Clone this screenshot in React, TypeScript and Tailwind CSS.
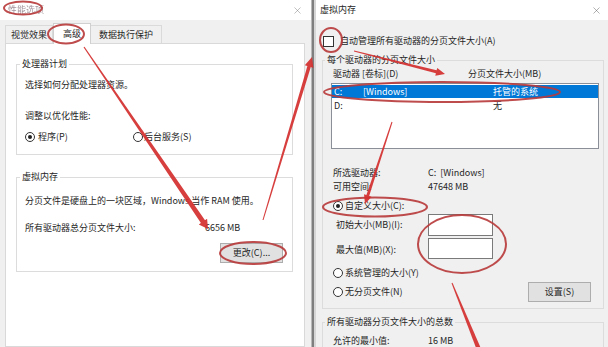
import { X } from "lucide-react";

const font = 'font-["Noto_Sans_CJK_SC","Noto_Sans",sans-serif]';

function Radio({ checked }: { checked?: boolean }) {
  return (
    <span className="flex h-[10px] w-[10px] shrink-0 items-center justify-center rounded-full border border-[#333] bg-white">
      {checked && <span className="h-[4px] w-[4px] rounded-full bg-[#222]" />}
    </span>
  );
}

function Button({ label }: { label: string }) {
  return (
    <div className="flex h-[20px] w-[63px] items-center justify-center border border-[#adadad] bg-[#e1e1e1]">
      {label}
    </div>
  );
}

// tapered red arrow: thin at start, thick at the head
function arrowPoints(
  x1: number,
  y1: number,
  x2: number,
  y2: number,
  w1: number,
  w2: number,
  head: number,
  headW: number
) {
  const dx = x2 - x1;
  const dy = y2 - y1;
  const len = Math.hypot(dx, dy);
  const ux = dx / len;
  const uy = dy / len;
  const nx = -uy;
  const ny = ux;
  const bx = x2 - ux * head;
  const by = y2 - uy * head;
  const pts: [number, number][] = [
    [x1 + (nx * w1) / 2, y1 + (ny * w1) / 2],
    [bx + (nx * w2) / 2, by + (ny * w2) / 2],
  ];
  if (head > 0) {
    pts.push([bx + (nx * headW) / 2, by + (ny * headW) / 2]);
    pts.push([x2, y2]);
    pts.push([bx - (nx * headW) / 2, by - (ny * headW) / 2]);
  }
  pts.push([bx - (nx * w2) / 2, by - (ny * w2) / 2]);
  pts.push([x1 - (nx * w1) / 2, y1 - (ny * w1) / 2]);
  return pts.map((p) => `${p[0].toFixed(1)},${p[1].toFixed(1)}`).join(" ");
}

const arrows = [
  arrowPoints(84, 47, 208, 229, 1.2, 5, 9, 10),
  arrowPoints(263, 220, 312, 57, 1, 3.5, 10, 9),
  arrowPoints(354, 51, 445, 74, 1, 3, 9, 8),
  arrowPoints(392, 122, 365, 204, 1, 3, 9, 8),
  arrowPoints(452, 283, 480, 352, 1, 4.5, 0, 0),
];

const ellipses = [
  { cx: 23, cy: 8, rx: 19, ry: 6.5 },
  { cx: 66, cy: 34, rx: 18, ry: 9.5 },
  { cx: 253, cy: 253, rx: 33, ry: 11 },
  { cx: 331, cy: 40, rx: 11, ry: 12 },
  { cx: 442, cy: 92, rx: 118, ry: 10 },
  { cx: 375, cy: 207, rx: 52, ry: 9.5 },
  { cx: 462, cy: 244, rx: 44, ry: 29 },
];

function PerformanceDialog() {
  return (
    <div className="flex w-[311px] shrink-0 flex-col">
      <div className="flex h-[20px] shrink-0 items-center justify-between bg-white pl-[8px] pr-[8px]">
        <span className="text-[9px] text-[#a4949c] blur-[0.5px]">性能选项</span>
        <X size={11} strokeWidth={1} className="text-[#777]" />
      </div>
      <div className="flex flex-1 flex-col bg-[#f0f0f0] pl-[5px] pr-[6px]">
        <div className="flex h-[23px] shrink-0 items-end">
          <div className="flex h-[18px] items-center border border-b-0 border-[#dadada] px-[5px]">视觉效果</div>
          <div className="relative -mb-px flex h-[21px] items-center border border-b-0 border-[#d0d0d0] bg-white px-[9px]">
            高级
          </div>
          <div className="flex h-[18px] items-center border border-b-0 border-l-0 border-[#dadada] px-[8px]">
            数据执行保护
          </div>
        </div>
        <div className="flex flex-1 flex-col border border-[#d9d9d9] bg-white">
          <fieldset className="ml-[10px] mr-[11px] mt-[14px] shrink-0 border border-[#dcdcdc] pb-[11px] pl-[8px] pr-[8px]">
            <legend className="ml-[-5px] px-[2px] leading-[12px]">处理器计划</legend>
            <div className="mt-[9px] h-[12px]">选择如何分配处理器资源。</div>
            <div className="mt-[19px] h-[12px]">调整以优化性能:</div>
            <div className="mt-[9px] flex h-[12px] items-center">
              <div className="flex w-[108px] items-center gap-[3px]">
                <Radio checked />
                <span>程序(P)</span>
              </div>
              <div className="flex items-center gap-[1px]">
                <Radio />
                <span>后台服务(S)</span>
              </div>
            </div>
          </fieldset>
          <fieldset className="ml-[10px] mr-[11px] mt-[16px] shrink-0 border border-[#dcdcdc] pb-[8px] pl-[8px] pr-[9px]">
            <legend className="ml-[-5px] px-[2px] leading-[12px]">虚拟内存</legend>
            <div className="mt-[12px] h-[12px] whitespace-nowrap">分页文件是硬盘上的一块区域，Windows 当作 RAM 使用。</div>
            <div className="mt-[15px] flex h-[12px]">
              <span className="w-[180px]">所有驱动器总分页文件大小:</span>
              <span>6656 MB</span>
            </div>
            <div className="mt-[9px] flex justify-end">
              <Button label="更改(C)..." />
            </div>
          </fieldset>
        </div>
      </div>
    </div>
  );
}

function VirtualMemoryDialog() {
  return (
    <div className="flex flex-1 flex-col">
      <div className="flex h-[20px] shrink-0 items-center justify-between bg-white pl-[4px] pr-[6px]">
        <span className="text-[9px]">虚拟内存</span>
        <X size={11} strokeWidth={1} className="text-[#555]" />
      </div>
      <div className="flex flex-1 flex-col bg-[#f0f0f0]">
        <div className="mt-[15px] flex h-[12px] shrink-0 items-center gap-[6px] pl-[7px]">
          <span className="h-[11px] w-[11px] border border-[#333] bg-white" />
          <span>自动管理所有驱动器的分页文件大小(A)</span>
        </div>
        <fieldset className="ml-[6px] mr-[4px] mt-[7px] shrink-0 border border-[#dcdcdc] pb-[6px] pl-[8px] pr-[4px]">
          <legend className="ml-[-6px] px-[2px] leading-[12px]">每个驱动器的分页文件大小</legend>
          <div className="mt-[2px] flex h-[12px] pl-[2px]">
            <span className="w-[135px]">驱动器 [卷标](D)</span>
            <span>分页文件大小(MB)</span>
          </div>
          <div className="mt-[3px] h-[66px] w-[268px] border border-[#8a8f98] bg-white pt-[1px]">
            <div className="flex h-[13px] items-center bg-[#0078d7] pl-[2px] text-white">
              <span className="w-[29px]">C:</span>
              <span className="w-[130px]">[Windows]</span>
              <span>托管的系统</span>
            </div>
            <div className="mt-[2px] flex h-[12px] items-center pl-[2px]">
              <span className="w-[159px]">D:</span>
              <span>无</span>
            </div>
          </div>
          <div className="mt-[18px] flex h-[12px] pl-[2px]">
            <span className="w-[95px]">所选驱动器:</span>
            <span>C:&nbsp; [Windows]</span>
          </div>
          <div className="mt-[2px] flex h-[12px] pl-[2px]">
            <span className="w-[95px]">可用空间:</span>
            <span>47648 MB</span>
          </div>
          <div className="mt-[7px] flex h-[12px] items-center gap-[2px] pl-[2px]">
            <Radio checked />
            <span>自定义大小(C):</span>
          </div>
          <div className="mt-[2px] flex h-[22px] items-center pl-[5px]">
            <span className="w-[92px]">初始大小(MB)(I):</span>
            <span className="h-[22px] w-[65px] border border-[#7a7a7a] bg-white" />
          </div>
          <div className="mt-[2px] flex h-[21px] items-center pl-[5px]">
            <span className="w-[92px] pt-[2px]">最大值(MB)(X):</span>
            <span className="h-[21px] w-[65px] border border-[#7a7a7a] bg-white" />
          </div>
          <div className="mt-[8px] flex h-[12px] items-center gap-[2px] pl-[2px]">
            <Radio />
            <span>系统管理的大小(Y)</span>
          </div>
          <div className="mt-[3px] flex h-[20px] items-center pl-[2px]">
            <div className="flex items-center gap-[2px]">
              <Radio />
              <span>无分页文件(N)</span>
            </div>
            <div className="ml-auto mr-[8px]">
              <Button label="设置(S)" />
            </div>
          </div>
        </fieldset>
        <fieldset className="ml-[6px] mr-[4px] mt-[7px] shrink-0 border border-[#dcdcdc] pb-[6px] pl-[8px]">
          <legend className="ml-[-6px] px-[2px] leading-[12px]">所有驱动器分页文件大小的总数</legend>
          <div className="mt-[7px] flex h-[12px] pl-[2px]">
            <span className="w-[95px]">允许的最小值:</span>
            <span>16 MB</span>
          </div>
        </fieldset>
      </div>
    </div>
  );
}

export default function App() {
  return (
    <div
      className={`relative flex h-[347px] w-[608px] overflow-hidden bg-[#f0f0f0] text-[9px] leading-[12px] text-[#262626] ${font}`}
    >
      <PerformanceDialog />
      <div className="w-[5px] shrink-0 border-l border-r-2 border-l-[#b9b9b9] border-r-[#d6d6d6] bg-[#7f7f7f]" />
      <VirtualMemoryDialog />

      {/* red annotations drawn over the screenshot */}
      <svg
        className="pointer-events-none absolute inset-0"
        width={608}
        height={347}
        viewBox="0 0 608 347"
      >
        {ellipses.map((e, i) => (
          <ellipse
            key={i}
            cx={e.cx}
            cy={e.cy}
            rx={e.rx}
            ry={e.ry}
            fill="none"
            stroke="#b8383a"
            strokeWidth={2}
            opacity={0.9}
          />
        ))}
        {arrows.map((p, i) => (
          <polygon key={i} points={p} fill="#d42f2f" opacity={0.92} />
        ))}
      </svg>
    </div>
  );
}
